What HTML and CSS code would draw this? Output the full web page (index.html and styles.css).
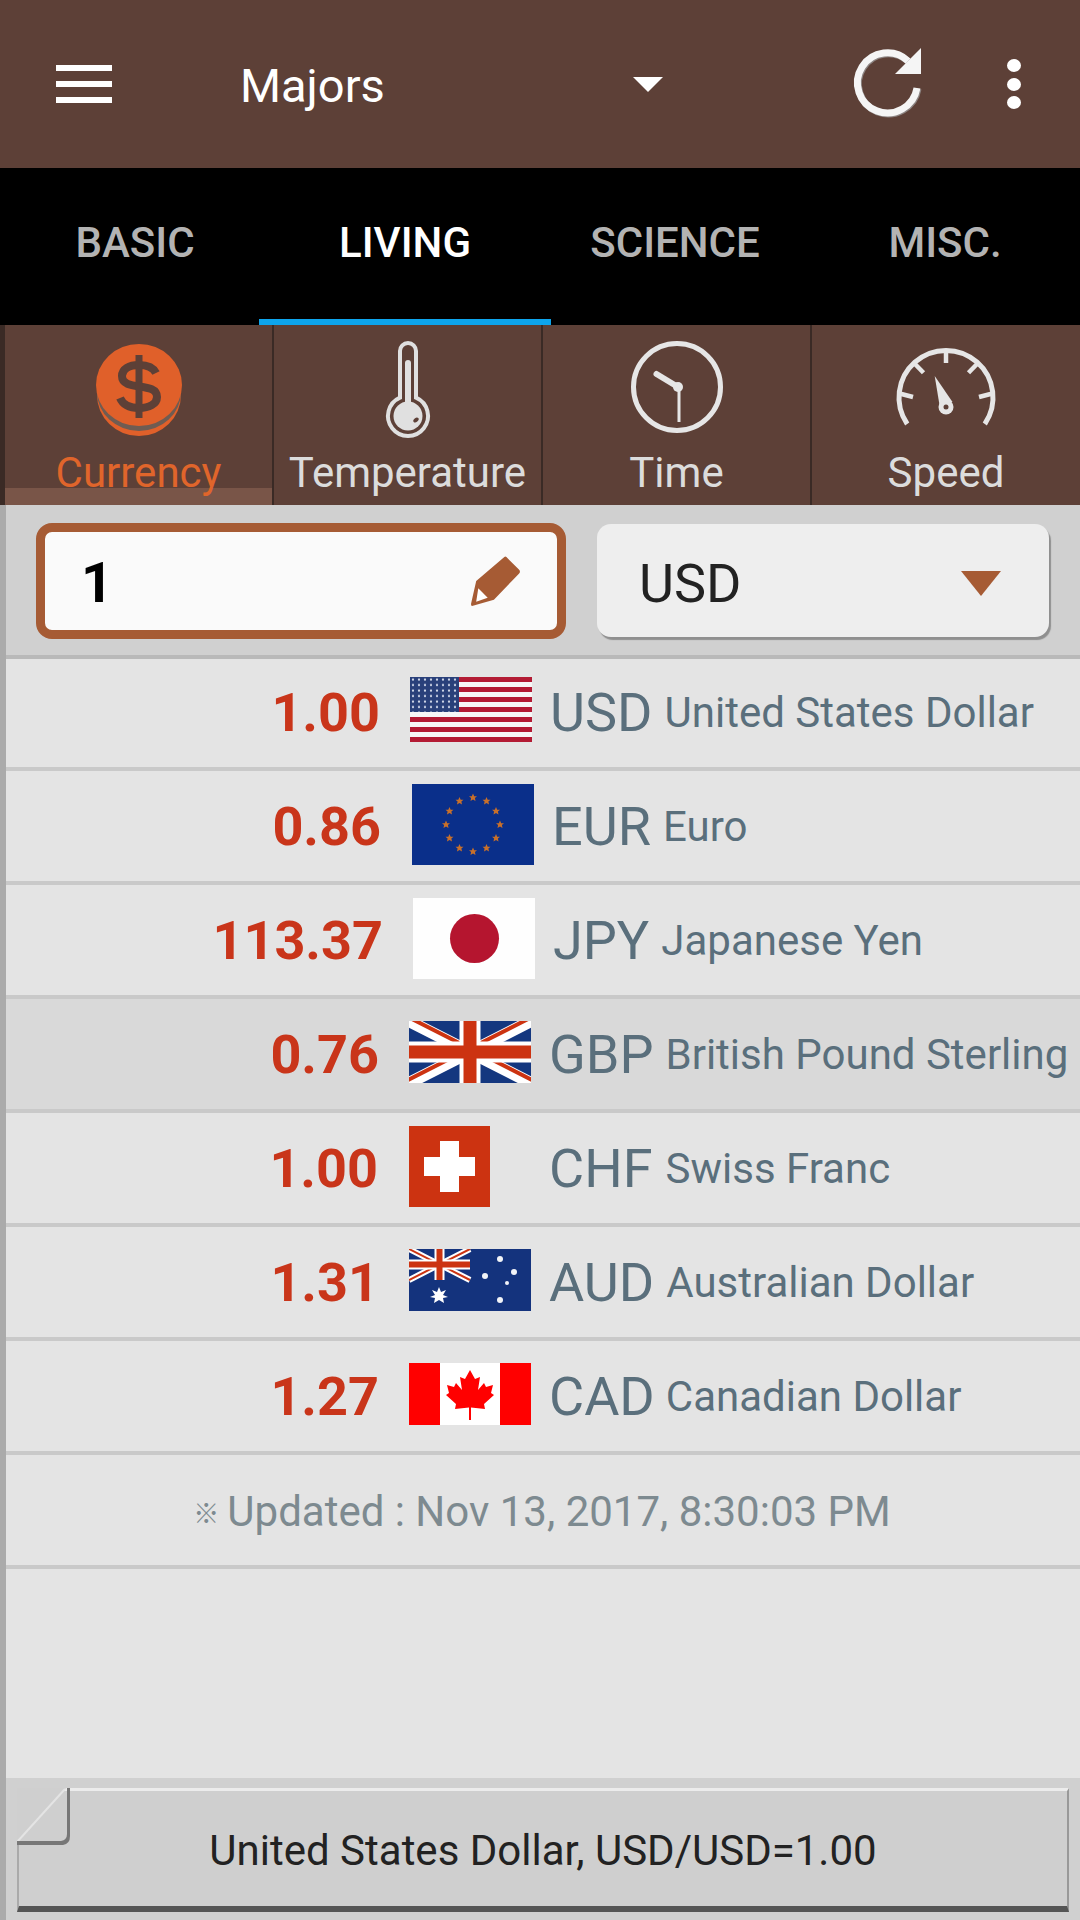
FILE: index.html
```html
<!DOCTYPE html>
<html lang="en">
<head>
<meta charset="utf-8">
<title>Unit Converter</title>
<link rel="stylesheet" href="styles.css">
</head>
<body>
<div class="app">
  <header class="appbar">
    <div class="menu"><span></span><span></span><span></span></div>
    <div class="title">Majors</div>
    <div class="title-caret"></div>
    <svg class="refresh" viewBox="0 0 80 80"><path d="M59 19A30 30 0 1 0 68 46" fill="none" stroke="#8d8583" stroke-width="7" transform="translate(1 1)"/><path d="M59 19A30 30 0 1 0 68 46" fill="none" stroke="#f5f5f5" stroke-width="7"/><path d="M72 6V32H46Z" fill="#f5f5f5"/></svg>
    <div class="more"><span></span><span></span><span></span></div>
  </header>

  <nav class="tabs">
    <div class="tab">BASIC</div>
    <div class="tab tab-active">LIVING</div>
    <div class="tab">SCIENCE</div>
    <div class="tab">MISC.</div>
  </nav>

  <section class="cats">
    <div class="cat cat-active">
      <svg class="cat-icon" viewBox="0 0 90 100">
        <ellipse cx="45" cy="55" rx="42" ry="41" fill="#e0602a"/>
        <ellipse cx="45" cy="52" rx="42" ry="39" fill="#6f5c52"/>
        <ellipse cx="45" cy="45" rx="43" ry="41" fill="#e0602a"/>
        <path d="M62 33C59 27 53 25 45 25C35 25 28 29 28 36C28 52 63 41 63 57C63 64 55 68 45 68C36 68 29 65 26 58" fill="none" stroke="#5d4037" stroke-width="8"/>
        <rect x="41.500" y="15" width="7" height="63" fill="#5d4037"/>
      </svg>
      <div class="cat-label">Currency</div>
    </div>
    <div class="cat">
      <svg class="cat-icon" viewBox="0 0 90 100">
        <path d="M37 57.700V11a8 8 0 0 1 16 0V57.700A20 20 0 1 1 37 57.700Z" fill="none" stroke="#e0e0e0" stroke-width="4"/>
        <rect x="42" y="20" width="6" height="50" rx="3" fill="#e0e0e0"/>
        <circle cx="45" cy="76" r="14.500" fill="#e0e0e0"/>
        <ellipse cx="53" cy="80" rx="3" ry="2" fill="#5d4037" transform="rotate(-40 53 80)"/>
      </svg>
      <div class="cat-label">Temperature</div>
    </div>
    <div class="cat">
      <svg class="cat-icon" viewBox="0 0 90 100">
        <circle cx="45" cy="47" r="43.500" fill="none" stroke="#e6e6e6" stroke-width="5"/>
        <path d="M46 47 24.500 34" stroke="#e6e6e6" stroke-width="6" stroke-linecap="round"/>
        <path d="M47 47V82" stroke="#e6e6e6" stroke-width="3"/>
        <circle cx="46" cy="47" r="5" fill="#e6e6e6"/>
      </svg>
      <div class="cat-label">Time</div>
    </div>
    <div class="cat">
      <svg class="cat-icon" viewBox="0 0 110 100">
        <path d="M16.200 84A47 47 0 1 1 93.800 84" fill="none" stroke="#e6e6e6" stroke-width="5"/>
        <g stroke="#e6e6e6" stroke-width="4.500">
          <path d="M55 13V23"/><path d="M23 23 32.500 32.700"/><path d="M87 23 77.500 32.700"/><path d="M7.600 53.300 22 57"/><path d="M102.400 53.300 88 57"/>
        </g>
        <path d="M43.700 36 48.500 65 61.500 62Z" fill="#e6e6e6"/>
        <circle cx="55" cy="67" r="7.500" fill="#e6e6e6"/>
        <circle cx="55" cy="67" r="2.500" fill="#5d4037"/>
      </svg>
      <div class="cat-label">Speed</div>
    </div>
  </section>

  <main class="body">
    <div class="controls">
      <div class="amount-input">
        <span class="amount-value">1</span>
        <svg class="pencil" viewBox="0 0 48 48"><path d="M32 1Q33 0 34 1L46 13Q48 15 46 17L22 42 1 48Q0 48 0 46L5 24Z" fill="#a65b34"/><path d="M7 31 16 40 5 44Z" fill="#fff"/></svg>
      </div>
      <div class="currency-select">
        <span class="select-value">USD</span>
        <span class="select-caret"></span>
      </div>
    </div>

    <div class="row row-usd">
      <div class="amount">1.00</div>
      <div class="flag-slot">
        <svg class="flag flag-us" viewBox="0 0 122 65" preserveAspectRatio="none">
          <defs><pattern id="usstars" width="6" height="5.500" patternUnits="userSpaceOnUse"><circle cx="3" cy="2.500" r="1.100" fill="#d9e0ee"/></pattern></defs>
          <rect width="122" height="65" fill="#f7f7f7"/>
          <g fill="#b31b34"><rect y="0" width="122" height="5"/><rect y="10" width="122" height="5"/><rect y="20" width="122" height="5"/><rect y="30" width="122" height="5"/><rect y="40" width="122" height="5"/><rect y="50" width="122" height="5"/><rect y="60" width="122" height="5"/></g>
          <rect width="49" height="35" fill="#29407a"/><rect width="49" height="35" fill="url(#usstars)"/>
        </svg>
      </div>
      <div class="code">USD</div>
      <div class="name">United States Dollar</div>
    </div>

    <div class="row row-eur">
      <div class="amount">0.86</div>
      <div class="flag-slot">
        <svg class="flag flag-tall" viewBox="0 0 122 81" preserveAspectRatio="none">
          <defs><polygon id="eustar" points="0,-4 1.200,-1.300 4,-1.200 1.900,.6 2.500,3.400 0,1.900 -2.500,3.400 -1.900,.6 -4,-1.200 -1.200,-1.300" fill="#c8702a"/></defs>
          <rect width="122" height="81" fill="#0a2f8a"/>
          <use href="#eustar" x="61" y="13.500"/><use href="#eustar" x="74.500" y="17"/><use href="#eustar" x="84" y="27"/><use href="#eustar" x="88" y="40.500"/><use href="#eustar" x="84" y="54"/><use href="#eustar" x="74.500" y="64"/><use href="#eustar" x="61" y="67.500"/><use href="#eustar" x="47.500" y="64"/><use href="#eustar" x="37.500" y="54"/><use href="#eustar" x="34" y="40.500"/><use href="#eustar" x="37.500" y="27"/><use href="#eustar" x="47.500" y="17"/>
        </svg>
      </div>
      <div class="code">EUR</div>
      <div class="name">Euro</div>
    </div>

    <div class="row row-jpy">
      <div class="amount">113.37</div>
      <div class="flag-slot">
        <svg class="flag flag-tall" viewBox="0 0 122 81" preserveAspectRatio="none"><rect width="122" height="81" fill="#fefefe"/><circle cx="61.500" cy="40.500" r="24.500" fill="#b5152f"/></svg>
      </div>
      <div class="code">JPY</div>
      <div class="name">Japanese Yen</div>
    </div>

    <div class="row row-gbp">
      <div class="amount">0.76</div>
      <div class="flag-slot">
        <svg class="flag flag-wide" viewBox="0 0 122 62" preserveAspectRatio="none">
          <rect width="122" height="62" fill="#14377f"/>
          <path d="M0 0 122 62M122 0 0 62" stroke="#fff" stroke-width="12"/>
          <path d="M0 0 61 31M122 62 61 31" stroke="#cc3311" stroke-width="4" transform="translate(3 -2)"/>
          <path d="M122 0 61 31M0 62 61 31" stroke="#cc3311" stroke-width="4" transform="translate(-3 -2)"/>
          <path d="M61 0V62M0 31H122" stroke="#fff" stroke-width="21"/>
          <path d="M61 0V62M0 31H122" stroke="#cc3311" stroke-width="13"/>
        </svg>
      </div>
      <div class="code">GBP</div>
      <div class="name">British Pound Sterling</div>
    </div>

    <div class="row row-chf">
      <div class="amount">1.00</div>
      <div class="flag-slot">
        <svg class="flag flag-square" viewBox="0 0 81 81"><rect width="81" height="81" fill="#cc3311"/><path d="M31 15H50V31H66V50H50V66H31V50H15V31H31Z" fill="#fff"/></svg>
      </div>
      <div class="code">CHF</div>
      <div class="name">Swiss Franc</div>
    </div>

    <div class="row row-aud">
      <div class="amount">1.31</div>
      <div class="flag-slot">
        <svg class="flag flag-wide" viewBox="0 0 122 62" preserveAspectRatio="none">
          <rect width="122" height="62" fill="#14337d"/>
          <path d="M0 0 61 31M61 0 0 31" stroke="#fff" stroke-width="6"/>
          <path d="M0 0 61 31M61 0 0 31" stroke="#cc3311" stroke-width="2"/>
          <path d="M30.500 0V31M0 15.500H61" stroke="#fff" stroke-width="10"/>
          <path d="M30.500 0V31M0 15.500H61" stroke="#cc3311" stroke-width="6"/>
          <polygon points="30,38 32,43 37,41 34,46 39,48 34,49 35,54 30,51 25,54 26,49 21,48 26,46 23,41 28,43" fill="#fff"/>
          <g fill="#f2f4f8"><circle cx="91" cy="10" r="3"/><circle cx="76" cy="27" r="3"/><circle cx="105" cy="23" r="3"/><circle cx="98" cy="34" r="2"/><circle cx="91" cy="51" r="3"/></g>
        </svg>
      </div>
      <div class="code">AUD</div>
      <div class="name">Australian Dollar</div>
    </div>

    <div class="row row-cad">
      <div class="amount">1.27</div>
      <div class="flag-slot">
        <svg class="flag flag-wide" viewBox="0 0 122 62" preserveAspectRatio="none">
          <rect width="122" height="62" fill="#fff"/>
          <rect width="31" height="62" fill="#f00"/><rect x="91" width="31" height="62" fill="#f00"/>
          <path d="M61 7 66 16 71 14 69 27 75 20 77 24 84 22 82 30 85 32 75 41 76 46 62 44.500V57H60V44.500L46 46 47 41 37 32 40 30 38 22 45 24 47 20 53 27 51 14 56 16Z" fill="#f00"/>
        </svg>
      </div>
      <div class="code">CAD</div>
      <div class="name">Canadian Dollar</div>
    </div>

    <div class="row row-updated">
      <span class="updated-mark">※</span><span class="updated">Updated : Nov 13, 2017, 8:30:03 PM</span>
    </div>

    <div class="spacer"></div>

    <footer class="footer">
      <div class="summary">
        <span class="summary-text">United States Dollar, USD/USD=1.00</span>
        <svg class="fold" viewBox="0 0 54 58"><path d="M0 0H49L0 54Z" fill="#cfcfcf"/><path d="M0 54 48 1" stroke="#e4e4e4" stroke-width="2" fill="none"/><path d="M50 0V46Q50 52 44 53H0V57H46Q53 56 53 48V0Z" fill="#777"/></svg>
      </div>
    </footer>
  </main>
</div>
</body>
</html>
```
FILE: styles.css
```css
* { box-sizing: border-box; }
html, body { margin: 0; padding: 0; }
body { font-family: Roboto, "Liberation Sans", sans-serif; background: #e4e4e4; }
.app { width: 1080px; height: 1920px; display: flex; flex-direction: column; overflow: hidden; }

.appbar { height: 168px; background: #5d4037; display: flex; align-items: center; color: #fff; flex: none; }
.menu { width: 56px; height: 38px; margin-left: 56px; display: flex; flex-direction: column; justify-content: space-between; }
.menu span { height: 6px; background: #fff; }
.title { font-size: 47px; margin-left: 128px; width: 393px; padding-top: 2px; }
.title-caret { width: 0; height: 0; border-left: 15px solid transparent; border-right: 15px solid transparent; border-top: 15px solid #fff; }
.refresh { width: 80px; height: 80px; margin-left: 186px; margin-top: -4px; }
.more { width: 14px; height: 50px; margin-left: 78px; display: flex; flex-direction: column; justify-content: space-between; margin-top: 0; }
.more span { width: 14px; height: 13px; border-radius: 50%; background: #fff; }

.tabs { height: 157px; background: #000; display: grid; grid-template-columns: repeat(4, 270px); flex: none; }
.tab { position: relative; display: flex; align-items: center; justify-content: center; font-size: 42px; font-weight: 500; color: #b3b3b3; padding-bottom: 9px; }
.tab-active { color: #fff; }
.tab-active::after { content: ""; position: absolute; left: -11px; right: -11px; bottom: 0; height: 6px; background: #0ea5ec; }

.cats { height: 180px; flex: none; background: #5d4037; display: grid; grid-template-columns: 269px 269px 269px 1fr; border-left: 5px solid #3a2a25; }
.cat { display: flex; flex-direction: column; align-items: center; border-right: 2px solid #3a2a25; padding-top: 15px; position: relative; }
.cat:last-child { border-right: 0; }
.cat-icon { height: 100px; width: 110px; flex: none; }
.cat-label { font-size: 42px; color: #dcdcdc; line-height: 48px; margin-top: 9px; position: relative; z-index: 1; }
.cat-active .cat-label { color: #e0652b; }
.cat-active::after { content: ""; position: absolute; left: 0; right: 0; bottom: 0; height: 17px; background: #795548; }

.body { flex: 1; display: flex; flex-direction: column; border-left: 6px solid #ababab; min-height: 0; }
.controls { height: 154px; flex: none; background: #d0d0d0; border-bottom: 4px solid #b9b9b9; display: flex; align-items: flex-start; padding: 18px 0 0 30px; }
.amount-input { width: 530px; height: 116px; border: 9px solid #a65b34; border-radius: 16px; background: #fafafa; display: flex; align-items: center; justify-content: space-between; padding: 4px 36px 0 36px; }
.amount-value { font-size: 56px; font-weight: 700; color: #000; }
.pencil { width: 50px; height: 50px; margin-top: -4px; }
.currency-select { width: 452px; height: 113px; margin-left: 31px; margin-top: 1px; background: #eee; border-radius: 14px; box-shadow: 2px 3px 1px #8f8f8f; display: flex; align-items: center; justify-content: space-between; padding: 6px 48px 0 42px; }
.select-value { font-size: 54px; color: #222; }
.select-caret { width: 0; height: 0; border-left: 20px solid transparent; border-right: 20px solid transparent; border-top: 25px solid #a65b34; }

.row { height: 114px; flex: none; display: flex; align-items: center; border-bottom: 4px solid #c9c9c9; padding-bottom: 4px; }
.amount { font-size: 54px; font-weight: 700; color: #c9351a; text-align: right; flex: none; width: var(--amount-w); padding-top: 4px; }
.flag-slot { width: 123px; flex: none; margin-left: var(--flag-gap); display: flex; }
.flag { display: block; }
.flag-wide { width: 122px; height: 62px; }
.flag-us { width: 122px; height: 65px; margin-bottom: 1px; }
.flag-tall { width: 122px; height: 81px; }
.flag-square { width: 81px; height: 81px; }
.code { font-size: 54px; color: #5a6f7c; margin-left: var(--code-gap); flex: none; padding-top: 4px; }
.name { font-size: 42px; color: #5a6f7c; margin-left: var(--name-gap); white-space: nowrap; padding-top: 4px; }

.row-usd { height: 112px; padding-bottom: 6px; --amount-w: 374px; --flag-gap: 30px; --code-gap: 17px; --name-gap: 12px; }
.row-eur { --amount-w: 375px; --flag-gap: 31px; --code-gap: 17px; --name-gap: 12px; }
.row-jpy { --amount-w: 377px; --flag-gap: 30px; --code-gap: 17px; --name-gap: 12px; }
.row-gbp { --amount-w: 373px; --flag-gap: 30px; --code-gap: 17px; --name-gap: 12px; background: #d9d9d9; }
.row-chf { --amount-w: 372px; --flag-gap: 31px; --code-gap: 17px; --name-gap: 13px; }
.row-aud { --amount-w: 373px; --flag-gap: 30px; --code-gap: 17px; --name-gap: 12px; }
.row-cad { --amount-w: 373px; --flag-gap: 30px; --code-gap: 17px; --name-gap: 11px; }
.row-updated { justify-content: center; color: #7d8a90; font-size: 42px; padding-right: 2px; }
.updated { padding-top: 7px; }
.updated-mark { font-size: 26px; margin-right: 8px; padding-top: 7px; font-family: "Noto Sans CJK JP", sans-serif; }

.spacer { flex: 1; }
.footer { height: 142px; flex: none; background: #d0d0d0; padding: 10px 11px 8px 11px; }
.summary { position: relative; height: 124px; background: #cfcfcf; border-top: 3px solid #ececec; border-bottom: 6px solid #555; border-left: 2px solid #aaa; border-right: 2px solid #999; display: flex; align-items: center; justify-content: center; padding-top: 4px; }
.summary-text { font-size: 42px; color: #222; }
.fold { position: absolute; left: -2px; top: -3px; width: 54px; height: 58px; }
```
